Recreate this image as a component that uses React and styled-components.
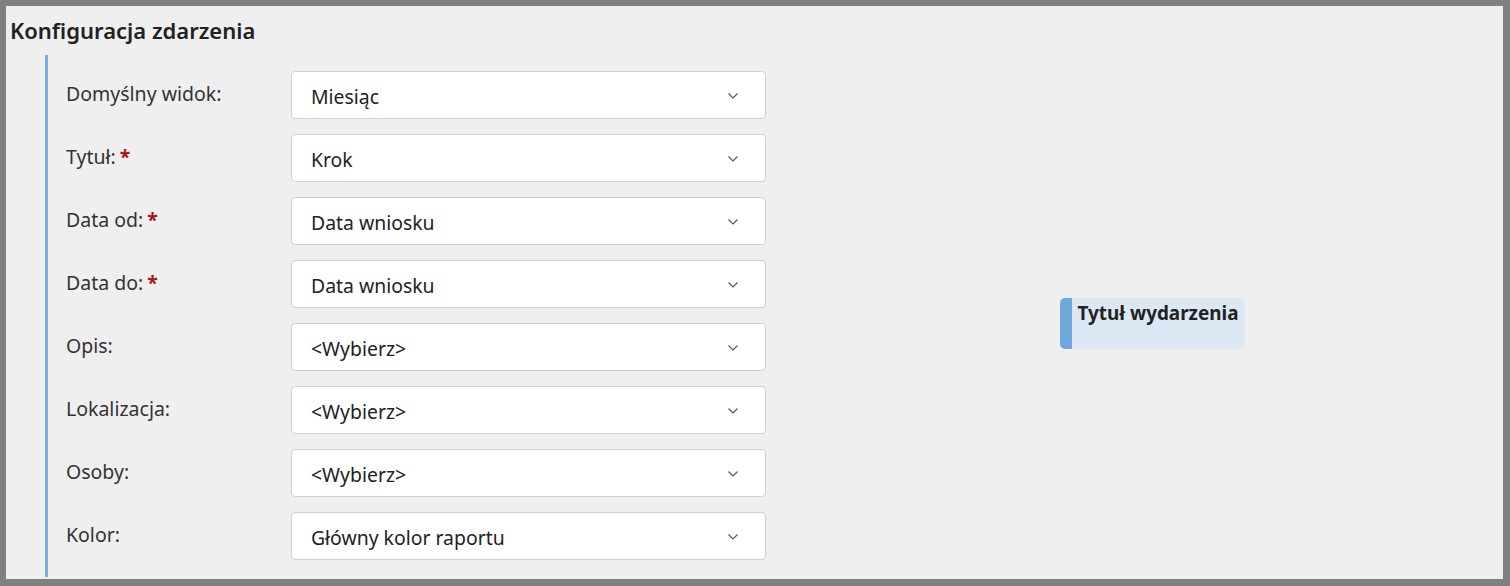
import React from 'react';
import styled, { createGlobalStyle } from 'styled-components';

const GlobalStyle = createGlobalStyle`
  html, body {
    margin: 0;
    padding: 0;
    background: #808080;
  }
  body {
    font-family: "Noto Sans", "Open Sans", sans-serif;
    color: #333;
  }
`;

const Frame = styled.div`
  box-sizing: border-box;
  width: 1510px;
  height: 586px;
  padding: 6px 7px 7px 6px;
  background: #808080;
`;

const Page = styled.div`
  height: 100%;
  background: #efefef;
  padding: 10px 0 0 4px;
  box-sizing: border-box;
  display: flex;
  flex-direction: column;
`;

const Title = styled.h2`
  margin: 0;
  font-size: 22px;
  font-weight: 600;
  color: #222;
  line-height: 28px;
`;

const Body = styled.div`
  flex: 1;
  display: flex;
  margin: 11px 0 2px 35px;
`;

const Form = styled.div`
  border-left: 3px solid #7aaedc;
  padding: 16px 0 0 18px;
  display: flex;
  flex-direction: column;
  gap: 15px;
`;

const Row = styled.div`
  display: flex;
  align-items: center;
`;

const Label = styled.label`
  width: 225px;
  font-size: 19.5px;
  color: #333;
  margin-top: -4px;
`;

const Req = styled.span`
  color: #a4161a;
  font-weight: 700;
  margin-left: 4px;
`;

const Select = styled.div`
  box-sizing: border-box;
  width: 475px;
  height: 48px;
  background: #fff;
  border: 1px solid #d0d0d0;
  border-radius: 4px;
  display: flex;
  align-items: center;
  justify-content: space-between;
  padding: 2px 26px 0 19px;
  font-size: 19.4px;
  color: #222;
`;

const Chevron = styled.svg`
  width: 12px;
  height: 8px;
`;

const Preview = styled.div`
  flex: 1;
  display: flex;
  align-items: center;
  justify-content: center;
  padding: 0 0 0 35px;
  margin-top: 14px;
`;

const Card = styled.div`
  width: 185px;
  height: 51px;
  box-sizing: border-box;
  background: #dde8f5;
  border-left: 12px solid #6fa8dc;
  border-radius: 5px;
  padding: 2px 6px;
  font-size: 18.9px;
  font-weight: 700;
  color: #222;
  white-space: nowrap;
`;

const fields = [
  { label: 'Domyślny widok:', value: 'Miesiąc' },
  { label: 'Tytuł:', value: 'Krok', required: true },
  { label: 'Data od:', value: 'Data wniosku', required: true },
  { label: 'Data do:', value: 'Data wniosku', required: true },
  { label: 'Opis:', value: '<Wybierz>' },
  { label: 'Lokalizacja:', value: '<Wybierz>' },
  { label: 'Osoby:', value: '<Wybierz>' },
  { label: 'Kolor:', value: 'Główny kolor raportu' },
];

const App = () => (
  <Frame>
    <GlobalStyle />
    <Page>
      <Title>Konfiguracja zdarzenia</Title>
      <Body>
        <Form>
          {fields.map((f) => (
            <Row key={f.label}>
              <Label>
                {f.label}
                {f.required && <Req>*</Req>}
              </Label>
              <Select>
                <span>{f.value}</span>
                <Chevron viewBox="0 0 12 8">
                  <path d="M1.5 1.5 L6 6 L10.5 1.5" fill="none" stroke="#555" strokeWidth="1.1" />
                </Chevron>
              </Select>
            </Row>
          ))}
        </Form>
        <Preview>
          <Card>Tytuł wydarzenia</Card>
        </Preview>
      </Body>
    </Page>
  </Frame>
);

export default App;
